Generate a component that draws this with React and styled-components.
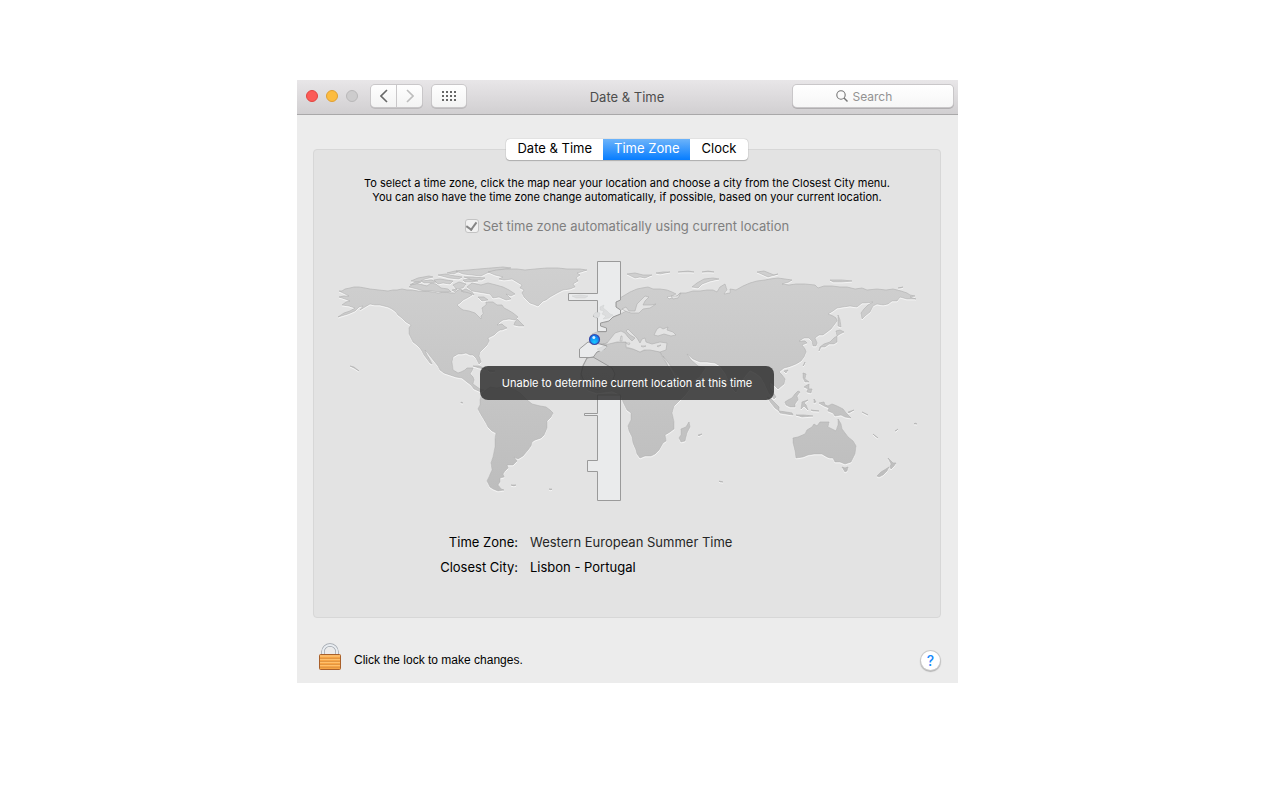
import React from 'react';
import styled, { createGlobalStyle } from 'styled-components';

const FONT = "Inter, 'Liberation Sans', sans-serif";
const COLOR_SEA = '#e3e3e3';
const COLOR_COAST = '#aeaeae';
const COLOR_ZONE_LINE = '#9a9a9a';

const GlobalStyle = createGlobalStyle`
  * {
    box-sizing: border-box;
  }

  body {
    margin: 0;
    background: #ffffff;
    font-family: ${FONT};
    font-size: 13px;
    color: #000000;
  }

  button,
  input {
    font: inherit;
  }
`;

const Page = styled.div`
  padding: 80px 322px 80px 297px;
`;

const Window = styled.main`
  min-width: 640px;
  background: #ececec;
`;

const Toolbar = styled.header`
  display: grid;
  grid-template-columns: 1fr auto 1fr;
  align-items: center;
  height: 35px;
  padding: 0 4px 2px 9px;
  background: linear-gradient(#e8e6e8, #d1cfd1);
  border-bottom: 1px solid #a9a8a9;
`;

const ToolbarLeft = styled.div`
  display: flex;
  align-items: center;
`;

const Lights = styled.div`
  display: flex;
  gap: 8px;
  margin-right: 13px;
`;

const Light = styled.button`
  width: 12px;
  height: 12px;
  padding: 0;
  border: 1px solid ${props => props.$edge};
  border-radius: 50%;
  background: ${props => props.$fill};
`;

const ToolButton = styled.button`
  display: flex;
  align-items: center;
  justify-content: center;
  width: ${props => props.$width || '26px'};
  height: 22px;
  padding: 0;
  border: 0;
  border-radius: ${props => props.$radius || '4px'};
  background: linear-gradient(#fefefe, #f3f3f3);
  box-shadow: 0 0 0 1px #c9c7c9, 0 1px 0 1px #bcbabc;
`;

const NavGroup = styled.div`
  display: flex;
  gap: 1px;
  margin-right: 10px;
`;

const Title = styled.h1`
  margin: 2px 6px 0 0;
  font-size: 13px;
  font-weight: 400;
  line-height: 16px;
  color: #4d4d4d;
`;

const SearchBox = styled.label`
  display: flex;
  align-items: center;
  justify-content: center;
  justify-self: end;
  gap: 5px;
  width: 160px;
  height: 22px;
  margin-right: 1px;
  border-radius: 4px;
  background: linear-gradient(#ffffff, #f6f6f6);
  box-shadow: 0 0 0 1px #c9c7c9, 0 1px 0 1px #b0aeb0;
`;

const SearchInput = styled.input`
  width: 58px;
  padding: 0;
  border: 0;
  outline: 0;
  background: transparent;
  font-size: 12px;

  &::placeholder {
    color: #929292;
    opacity: 1;
  }
`;

const Content = styled.div`
  padding: 24px 17px 0 16px;
`;

const Tabs = styled.div`
  position: relative;
  display: flex;
  width: fit-content;
  margin: 0 auto -11px;
  border-radius: 4px;
  background: #ffffff;
  box-shadow: 0 0 1px #8f8f8f, 0 1px 1px #b0b0b0;
`;

const Tab = styled.button`
  height: 21px;
  padding: 0 11px 2px;
  border: 0;
  border-radius: ${props => (props.$active ? '0' : '4px')};
  background: ${props => (props.$active ? 'linear-gradient(#6cb3fa, #067dff)' : 'transparent')};
  color: ${props => (props.$active ? '#ffffff' : '#000000')};
  line-height: 19px;
`;

const Panel = styled.section`
  display: flex;
  flex-direction: column;
  align-items: center;
  padding: 26px 16px 42px;
  border: 1px solid #d7d7d7;
  border-radius: 4px;
  background: ${COLOR_SEA};
`;

const Hint = styled.p`
  margin: 0;
  font-size: 11px;
  line-height: 14px;
  text-align: center;
`;

const CheckLabel = styled.label`
  display: flex;
  align-items: center;
  gap: 4px;
  margin: 14px 0 22px;
  line-height: 16px;
  color: #7f7f7f;
`;

const Checkbox = styled.input`
  appearance: none;
  display: grid;
  place-items: center;
  width: 14px;
  height: 14px;
  margin: 0;
  border: 1px solid #c3c3c3;
  border-radius: 3px;
  background: #f1f1f1;

  &:checked::after {
    content: '';
    width: 5px;
    height: 8px;
    margin-bottom: 2px;
    border: solid #858585;
    border-width: 0 2px 2px 0;
    transform: rotate(36deg);
  }
`;

const MapArea = styled.div`
  position: relative;
  width: 100%;
  max-width: 594px;
`;

const MapSvg = styled.svg`
  display: block;
  width: 100%;
`;

const Toast = styled.div`
  position: absolute;
  top: 110px;
  left: 50%;
  width: 294px;
  padding: 9px 0;
  border-radius: 8px;
  background: rgba(50, 50, 50, 0.86);
  color: #ffffff;
  font-size: 11px;
  line-height: 16px;
  text-align: center;
  white-space: nowrap;
  transform: translateX(-50%);
`;

const Details = styled.dl`
  display: grid;
  grid-template-columns: 188px 1fr;
  gap: 9px 12px;
  width: 100%;
  margin: 28px 0 0;
  line-height: 16px;
`;

const Term = styled.dt`
  text-align: right;
`;

const Value = styled.dd`
  margin: 0;
  color: ${props => props.$color || '#000000'};
`;

const Footer = styled.footer`
  display: flex;
  align-items: center;
  gap: 12px;
  height: 65px;
  padding: 20px 18px 0 21px;
`;

const LockButton = styled.button`
  height: 28px;
  margin-bottom: 8px;
  padding: 0;
  border: 0;
  background: none;
`;

const LockText = styled.span`
  flex: 1;
  margin-bottom: 1px;
  font-family: 'Liberation Sans', Arial, sans-serif;
  font-size: 12px;
`;

const HelpButton = styled.button`
  width: 19px;
  height: 19px;
  margin-bottom: 1px;
  padding: 0;
  border: 0;
  border-radius: 50%;
  background: #ffffff;
  box-shadow: 0 0 0 1px #c9c9c9, 0 1px 1px 1px #b4b4b4;
  color: #1488fb;
  font-size: 14px;
  font-weight: 500;
  line-height: 19px;
`;

const LAND = [
  // north america
  'M342 291L345 289 350 288 354 287 359 287 365 288 370 289 379 290 388 291 393 290 397 290 402 289 407 290 412 290 418 291 424 291 433 292 438 293 445 292 451 293 455 293 458 290 461 289 463 292 468 291 472 295 467 298 463 300 460 303 457 305 460 308 463 310 469 311 475 313 478 316 481 319 481 316 483 314 482 308 486 305 486 302 493 302 497 305 502 305 504 308 508 310 513 313 518 317 515 320 509 319 503 320 500 322 497 325 502 324 504 326 507 328 502 330 500 330 497 332 494 335 488 338 489 341 487 345 484 348 480 352 479 356 481 362 479 364 476 358 473 355 470 355 466 353 462 354 458 354 453 357 452 362 453 370 458 373 461 372 465 370 467 368 473 368 472 371 470 374 473 377 474 380 473 384 477 387 480 389 484 390 481 392 474 389 471 385 467 382 462 378 456 377 450 375 444 373 440 370 438 366 434 361 430 356 427 352 425 350 427 355 430 360 432 364 430 363 427 359 424 355 422 351 420 348 417 345 413 342 411 338 409 334 409 328 411 325 406 322 402 318 398 315 396 312 392 309 388 307 384 306 380 305 375 305 370 304 365 307 360 310 363 306 359 307 355 311 348 314 338 317 344 313 350 311 355 308 349 306 342 305 346 302 350 301 345 299 339 297 344 296 349 296 343 293 339 291Z',
  // canadian arctic
  'M409 287L414 283 419 284 427 286 431 283 436 284 441 288 448 289 451 292 440 292 432 291 424 291 417 289Z',
  'M411 281L418 278 429 276 433 277 425 279 419 282Z',
  'M410 285L415 282 421 282 416 284Z M421 281L431 280 437 282 430 283 424 283Z',
  'M434 280L440 279 446 280 453 281 450 284 443 283 438 284Z',
  'M438 275L446 274 455 276 462 277 459 279 449 278Z',
  'M447 273L455 271 460 271 454 274Z M463 280L470 279 478 281 471 282 465 282Z',
  'M453 285L459 282 466 284 463 288 456 289Z',
  'M461 291L466 289 472 292 474 295 469 293Z M452 290L457 289 455 292Z',
  'M456 271L468 270 479 269 491 268 503 267 511 268 500 270 489 272 481 276 472 275 463 274Z',
  'M464 277L473 277 485 278 482 280 472 280Z',
  'M467 287L472 283 481 285 488 283 496 285 503 287 509 290 515 294 511 296 506 294 511 299 506 300 499 297 493 298 490 294 484 293 478 292 472 291Z',
  'M478 297L484 297 488 300 482 301Z',
  'M515 322L517 319 521 323 524 326 519 326 514 325Z',
  // greenland
  'M488 272L496 270 507 269 517 269 525 270 535 269 547 268 558 268 567 269 580 269 587 270 581 272 577 273 580 275 576 278 578 281 573 284 575 287 570 289 563 290 557 293 550 297 546 300 543 301 540 304 538 306 533 304 530 303 527 300 524 297 522 293 524 290 520 288 522 285 517 282 512 279 504 280 499 279 503 277 495 275Z',
  // south america
  'M480 400L482 393 490 387 497 388 505 386 515 390 520 393 527 400 532 404 540 406 546 407 550 410 553 413 551 417 547 421 547 428 544 435 541 438 535 440 532 442 531 446 528 450 523 456 518 459 514 457 517 461 513 465 507 465 508 468 505 471 503 474 504 477 500 478 500 482 498 485 501 489 504 490 498 491 493 489 490 487 487 481 489 477 492 470 491 463 493 457 495 447 495 439 496 433 492 431 488 427 486 423 483 418 480 413 478 409 480 405Z',
  'M511 485L516 485 514 486Z',
  // cuba and hispaniola
  'M473 366L479 366 486 369 479 368Z M488 370L495 371 490 372Z',
  // europe and asia
  'M616 301L620 298 625 295 630 292 637 289 642 288 648 287 653 289 660 289 667 290 672 292 676 294 672 296 667 297 669 299 677 296 680 293 686 293 693 291 700 291 707 290 713 290 717 292 720 287 725 284 727 290 724 294 730 293 730 289 736 290 743 286 750 283 757 281 765 280 770 279 778 278 785 279 792 280 789 282 782 284 789 285 796 284 805 284 815 285 818 288 824 286 832 286 840 287 847 287 855 289 862 288 867 290 877 289 886 290 893 289 901 291 907 293 910 295 915 296 910 297 916 299 907 299 900 297 897 301 892 301 888 304 883 305 877 304 873 306 870 312 865 316 862 319 861 313 864 309 868 305 873 302 866 303 862 303 857 307 850 306 843 307 837 308 833 311 828 314 833 316 836 318 837 321 834 325 831 329 827 332 823 335 819 335 815 338 817 343 816 346 813 346 812 341 809 338 804 338 799 341 805 341 807 343 802 345 805 349 806 352 804 357 801 361 796 364 791 366 788 367 784 368 779 372 782 375 785 379 784 384 778 389 775 386 770 382 770 388 776 397 774 399 769 393 765 384 761 377 756 373 750 370 744 377 740 384 736 392 732 388 726 374 720 366 715 363 707 362 700 362 693 359 687 354 691 360 698 366 705 368 699 377 684 386 677 375 669 363 663 357 660 352 615 340 607 343 601 345 598 345 593 344 592 334 597 332 606 332 606 328 600 326 600 323 607 322 613 317 621 314 626 311 622 309 620 312 616 307Z',
  // africa
  'M600 344L610 343 625 342 628 344 626 348 633 349 640 352 648 349 660 352 663 358 669 367 678 383 681 386 693 384 690 388 685 395 679 401 674 406 672 413 674 422 674 429 670 432 665 435 666 441 663 443 659 450 655 454 651 456 645 456 640 458 637 454 636 450 633 443 632 437 629 431 628 426 631 420 631 413 627 410 625 406 623 402 622 398 619 394 612 391 597 393 588 390 580 378 583 365 587 358 594 350Z',
  'M689 422L690 427 687 433 685 441 681 442 679 438 681 435 681 429 686 427Z',
  // arctic russia
  'M627 274L635 273 643 275 652 275 645 278 640 277 635 278Z',
  'M692 287L697 283 704 279 713 278 719 279 710 281 702 284 698 288Z',
  'M656 273L663 272 670 272 660 274Z M678 272L688 271 694 272Z M702 272L708 271 714 272Z',
  'M757 272L764 271 774 275 778 274 768 277Z M830 280L842 280 852 281 842 282 833 282Z M898 288L903 287 901 288Z',
  // japan, sakhalin and philippines
  'M838 315L840 320 841 327 838 326Z',
  'M836 331L840 330 844 332 840 334 837 336Z',
  'M837 336L837 342 834 344 829 344 825 347 821 347 819 351 820 347 824 344 830 342 834 338Z',
  'M803 366L805 362 804 365Z M784 371L788 370 786 373Z',
  'M803 373L806 374 805 379 809 382 805 382 803 378Z M804 387L809 384 809 389 812 389 811 393 807 392 808 389Z',
  // indonesia and papua
  'M785 402L788 400 792 398 795 394 798 391 800 392 797 396 798 400 795 404 795 407 790 407 786 405Z',
  'M767 397L771 399 775 403 779 407 779 411 775 408 771 403Z',
  'M779 411L786 412 792 413 793 415 786 414 780 413Z M796 415L804 415 813 416 802 417Z',
  'M802 402L808 400 804 403 806 405 808 410 804 406 801 409Z M814 399L816 402 814 403Z M811 410L819 411 813 411Z',
  'M819 403L824 402 825 405 828 406 832 404 837 406 843 409 846 413 851 418 845 417 841 415 835 416 833 413 828 411 829 408 824 406Z',
  'M848 412L854 410 849 413Z M862 412L868 415 864 413Z M873 434L878 438 875 436Z M895 431L898 429 896 431Z M914 424L917 424 915 423Z',
  // australia and new zealand
  'M793 438L798 437 805 434 807 430 812 427 814 424 817 426 820 422 824 422 829 422 828 427 832 429 836 431 838 425 838 419 841 424 842 429 845 433 848 437 853 441 856 446 855 454 851 462 845 464 840 462 835 462 833 458 830 458 827 457 822 454 814 454 808 455 803 457 796 458 795 451 793 443Z',
  'M842 467L845 468 848 467 847 471 845 472Z',
  'M888 458L891 461 893 463 896 463 894 466 891 469 890 467 891 464Z',
  'M889 467L887 471 883 475 879 477 877 476 881 472 886 469Z',
  // small pacific and indian ocean islands
  'M350 366L354 367 359 371 354 368Z M461 402L463 403 461 403Z M549 489L552 489 551 490Z M719 481L723 482 720 482Z M698 435L702 434 699 436Z',
];

const INLAND_SEAS = [
  // mediterranean
  'M601 345L607 343 611 338 615 333 621 331 625 333 628 337 632 341 635 338 630 335 626 331 628 329 633 334 637 338 640 343 642 339 645 338 646 342 652 344 660 342 667 343 666 350 660 352 650 350 644 350 640 352 633 349 626 347 626 342 617 342 609 344Z',
  // black sea
  'M654 335L657 329 660 327 663 329 668 327 667 330 673 332 676 335 671 336 664 334 658 336Z',
  // baltic
  'M622 309L626 307 629 311 635 311 637 304 641 300 645 296 649 297 645 301 643 305 651 305 656 304 650 308 643 309 639 313 631 313 625 311Z',
  // white sea and red sea
  'M671 296L677 296 681 293 678 298 673 299Z',
  'M663 356L667 361 672 368 681 385 676 380 668 366Z',
];

const ZONE_SHAPES = [
  'M597.500 261.500H620.500V300L616 302V307L620.500 310V314L613 317 609 321 600.500 323V326L606.500 328V331.500H597.500V318L593 316 597.500 313V300.500H568.500V293.500H597.500V261.500Z',
  'M588 342L579.500 349V357.500H593L597 352 605 349 607 346 600 344Z',
  'M593 357L612 368 615 374 612 382 598 390 586 386 581 374 583 366 587 358Z',
  'M597.500 395V413.500H584.500V415.500H597.500V460.500H587.500V471.500H597.500V500.500H620.500V395Z',
];

const GRID_DOTS = [0, 4, 8, 12];

function WorldMap() {
  return (
    <MapSvg viewBox="330 256 594 250" role="img" aria-label="World time zone map">
      <defs>
        <linearGradient id="land" gradientUnits="userSpaceOnUse" x1="0" y1="265" x2="0" y2="490">
          <stop offset="0" stopColor="#d0d0d0" />
          <stop offset="1" stopColor="#bdbdbd" />
        </linearGradient>
        <radialGradient id="pin" cx="0.5" cy="0.75" r="0.7">
          <stop offset="0" stopColor="#19c8ff" />
          <stop offset="1" stopColor="#0a70ee" />
        </radialGradient>
        <filter id="emboss" x="-2%" y="-2%" width="104%" height="104%">
          <feDropShadow dx="0" dy="1" stdDeviation="0.4" floodColor="#f8f8f8" />
        </filter>
      </defs>
      <g fill="url(#land)" stroke={COLOR_COAST} strokeWidth="0.6" filter="url(#emboss)">
        {LAND.map(d => (
          <path key={d} d={d} />
        ))}
      </g>
      <g fill={COLOR_SEA} stroke={COLOR_COAST} strokeWidth="0.6">
        {INLAND_SEAS.map(d => (
          <path key={d} d={d} />
        ))}
        <path d="M621 336H622V341H620ZM626 343L630 343 629 345ZM641 346L646 346 643 347ZM657 346L661 345 658 347Z" />
      </g>
      <g fill="#eaebec" stroke={COLOR_ZONE_LINE}>
        {ZONE_SHAPES.map((d, i) => (
          <path key={d} d={d} fillOpacity={i === 2 ? 0.25 : 1} />
        ))}
      </g>
      <g fill="#dcddde" stroke="#cbcccd" strokeWidth="0.4">
        <path d="M600 307L604 305 603 308 607 311 610 314 613 315 609 318 603 319 606 316 602 314 604 311 600 310Z" />
        <path d="M593 315L596 312 600 313 599 317 595 318Z" />
        <path d="M572 296L580 295 588 296 585 298 576 298Z" />
        <path d="M597 349L604 346 607 347 601 352Z" />
      </g>
      <circle cx="594.500" cy="339.500" r="5" fill="url(#pin)" stroke="#3b4aa8" strokeWidth="1.200" />
      <circle cx="593.800" cy="337.500" r="1.500" fill="#d5f0ff" />
    </MapSvg>
  );
}

function LockIcon() {
  return (
    <svg width="24" height="28" viewBox="0 0 24 28" aria-hidden="true" display="block">
      <path d="M5 13V8.500a7 6.500 0 0 1 14 0V13" fill="none" stroke="#9aa0a8" strokeWidth="3.400" />
      <path d="M5 13V8.500a7 6.500 0 0 1 14 0V13" fill="none" stroke="#e9edf1" strokeWidth="2" />
      <rect x="1.500" y="11.500" width="21" height="15" rx="1" fill="#f6a445" stroke="#a9602a" />
      <path d="M2 13h20" stroke="#ffd08a" />
      <path d="M2 15.500h20M2 18.500h20M2 21.500h20M2 24.500h20" stroke="#e29642" />
      <path d="M2 16.500h20M2 19.500h20M2 22.500h20" stroke="#ffc06c" />
    </svg>
  );
}

export default function App() {
  return (
    <Page>
      <GlobalStyle />
      <Window>
        <Toolbar>
          <ToolbarLeft>
            <Lights>
              <Light $fill="#fc5b57" $edge="#e2443f" aria-label="Close" />
              <Light $fill="#fdbc40" $edge="#e0a032" aria-label="Minimize" />
              <Light $fill="#cdcccd" $edge="#b9b8b9" aria-label="Zoom" disabled />
            </Lights>
            <NavGroup>
              <ToolButton $width="25px" $radius="4px 0 0 4px" aria-label="Back">
                <svg width="8" height="14" viewBox="0 0 8 14">
                  <path d="M7 1L1 7L7 13" fill="none" stroke="#686868" strokeWidth="1.600" />
                </svg>
              </ToolButton>
              <ToolButton $width="25px" $radius="0 4px 4px 0" aria-label="Forward" disabled>
                <svg width="8" height="14" viewBox="0 0 8 14">
                  <path d="M1 1L7 7L1 13" fill="none" stroke="#bdbdbd" strokeWidth="1.600" />
                </svg>
              </ToolButton>
            </NavGroup>
            <ToolButton $width="34px" aria-label="Show all">
              <svg width="14" height="10" viewBox="0 0 14 10" fill="#666666">
                {GRID_DOTS.map(x => (
                  <path key={x} d={`M${x} 0h2v2h-2zM${x} 4h2v2h-2zM${x} 8h2v2h-2z`} />
                ))}
              </svg>
            </ToolButton>
          </ToolbarLeft>
          <Title>Date &amp; Time</Title>
          <SearchBox>
            <svg width="12" height="12" viewBox="0 0 12 12" fill="none" stroke="#747474">
              <circle cx="5" cy="5" r="4.200" strokeWidth="1.100" />
              <path d="M8 8L11.500 11.500" strokeWidth="1.400" />
            </svg>
            <SearchInput type="text" placeholder="Search" aria-label="Search" />
          </SearchBox>
        </Toolbar>
        <Content>
          <Tabs role="tablist">
            <Tab role="tab">Date &amp; Time</Tab>
            <Tab role="tab" aria-selected="true" $active>
              Time Zone
            </Tab>
            <Tab role="tab">Clock</Tab>
          </Tabs>
          <Panel>
            <Hint>
              To select a time zone, click the map near your location and choose a city from the Closest City menu.
              <br />
              You can also have the time zone change automatically, if possible, based on your current location.
            </Hint>
            <CheckLabel>
              <Checkbox type="checkbox" defaultChecked disabled />
              Set time zone automatically using current location
            </CheckLabel>
            <MapArea>
              <WorldMap />
              <Toast role="status">Unable to determine current location at this time</Toast>
            </MapArea>
            <Details>
              <Term>Time Zone:</Term>
              <Value $color="#262626">Western European Summer Time</Value>
              <Term>Closest City:</Term>
              <Value>Lisbon - Portugal</Value>
            </Details>
          </Panel>
        </Content>
        <Footer>
          <LockButton aria-label="Unlock">
            <LockIcon />
          </LockButton>
          <LockText>Click the lock to make changes.</LockText>
          <HelpButton aria-label="Help">?</HelpButton>
        </Footer>
      </Window>
    </Page>
  );
}
